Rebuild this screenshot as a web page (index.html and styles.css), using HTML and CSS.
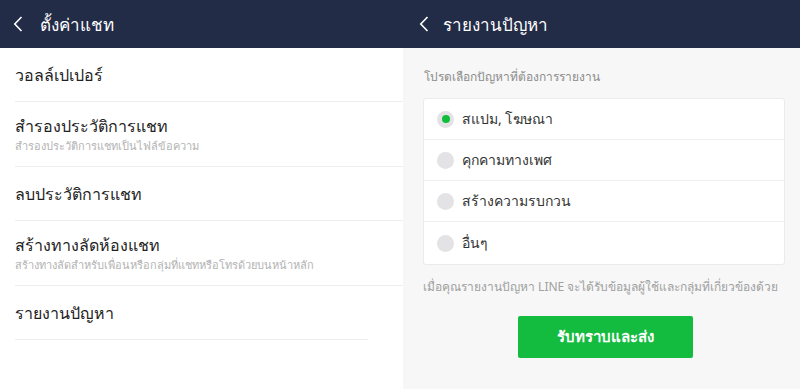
FILE: index.html
```html
<!DOCTYPE html>
<html lang="th">
<head>
<meta charset="utf-8">
<title>LINE</title>
<link rel="stylesheet" href="styles.css">
</head>
<body>
<div class="screen">
  <section class="panel settings">
    <header class="topbar">
      <svg class="back" viewBox="0 0 10 16" width="10" height="16"><path d="M8.5 1 L1.8 8 L8.5 15" fill="none" stroke="#fff" stroke-width="1.6"/></svg>
      <span class="title">ตั้งค่าแชท</span>
    </header>
    <ul class="list">
      <li class="item short"><span class="label">วอลล์เปเปอร์</span></li>
      <li class="item tall"><span class="label">สำรองประวัติการแชท</span><span class="sub">สำรองประวัติการแชทเป็นไฟล์ข้อความ</span></li>
      <li class="item short"><span class="label">ลบประวัติการแชท</span></li>
      <li class="item tall"><span class="label">สร้างทางลัดห้องแชท</span><span class="sub">สร้างทางลัดสำหรับเพื่อนหรือกลุ่มที่แชทหรือโทรด้วยบนหน้าหลัก</span></li>
      <li class="item short last"><span class="label">รายงานปัญหา</span></li>
    </ul>
  </section>
  <section class="panel report">
    <header class="topbar">
      <svg class="back" viewBox="0 0 10 16" width="10" height="16"><path d="M8.5 1 L1.8 8 L8.5 15" fill="none" stroke="#fff" stroke-width="1.6"/></svg>
      <span class="title">รายงานปัญหา</span>
    </header>
    <div class="body">
      <p class="hint">โปรดเลือกปัญหาที่ต้องการรายงาน</p>
      <div class="card">
        <div class="opt"><span class="radio on"></span><span class="opt-text">สแปม, โฆษณา</span></div>
        <div class="opt"><span class="radio"></span><span class="opt-text">คุกคามทางเพศ</span></div>
        <div class="opt"><span class="radio"></span><span class="opt-text">สร้างความรบกวน</span></div>
        <div class="opt"><span class="radio"></span><span class="opt-text">อื่นๆ</span></div>
      </div>
      <p class="note">เมื่อคุณรายงานปัญหา LINE จะได้รับข้อมูลผู้ใช้และกลุ่มที่เกี่ยวข้องด้วย</p>
      <div class="actions"><button class="submit">รับทราบและส่ง</button></div>
    </div>
  </section>
</div>
</body>
</html>
```
FILE: styles.css
```css
* { box-sizing: border-box; }
html, body { margin: 0; padding: 0; }
body {
  width: 800px;
  height: 389px;
  overflow: hidden;
  font-family: "Noto Sans", "Open Sans", sans-serif;
  background: #fff;
}
.screen { display: flex; height: 389px; }
.panel { display: flex; flex-direction: column; }
.settings { width: 403px; background: #fff; }
.report { flex: 1; background: #f7f7f7; }
.topbar {
  height: 48px;
  background: #232c47;
  display: flex;
  align-items: center;
  color: #fff;
  flex-shrink: 0;
}
.settings .topbar { padding-left: 13px; }
.report .topbar { padding-left: 16px; }
.back { flex-shrink: 0; }
.title { font-size: 17px; margin-left: 17px; line-height: 1; }
.report .title { margin-left: 14px; }

.list { list-style: none; margin: 0; padding: 0; }
.item {
  margin-left: 15px;
  border-bottom: 1px solid #ededed;
  display: flex;
  flex-direction: column;
  justify-content: center;
}
.item.short { height: 54px; }
.item.tall { height: 65px; padding-top: 1px; }
.item:first-child { height: 54px; }
.item.last { margin-right: 35px; }
.label { font-size: 16px; color: #222; line-height: 22px; }
.sub { font-size: 11px; color: #b3b3b3; line-height: 16px; margin-top: 1px; }

.body { padding: 0 15px 0 20px; display: flex; flex-direction: column; }
.hint { margin: 18px 0 0 1px; font-size: 12px; color: #8c8c8c; line-height: 22px; }
.card {
  margin: 10px 0 0 0;
  background: #fff;
  border: 1px solid #ebebeb;
  border-radius: 3px;
}
.opt {
  height: 41px;
  display: flex;
  align-items: center;
  padding-left: 13px;
  border-bottom: 1px solid #efefef;
}
.opt:last-child { border-bottom: none; height: 42px; }
.radio {
  width: 17px;
  height: 17px;
  border-radius: 50%;
  background: #e3e3e6;
  display: flex;
  align-items: center;
  justify-content: center;
}
.radio.on::after {
  content: "";
  width: 8px;
  height: 8px;
  border-radius: 50%;
  background: #0fbd3b;
}
.opt-text { margin-left: 8px; font-size: 14px; color: #333; }
.note { margin: 11px 0 0 0; font-size: 12px; color: #a0a0a0; line-height: 22px; white-space: nowrap; }
.actions { display: flex; justify-content: center; margin-top: 18px; padding-left: 2px; }
.submit {
  width: 175px;
  height: 42px;
  border: none;
  border-radius: 2px;
  background: #13bb3e;
  color: #fff;
  font-family: inherit;
  font-size: 15px;
  font-weight: bold;
}
```
